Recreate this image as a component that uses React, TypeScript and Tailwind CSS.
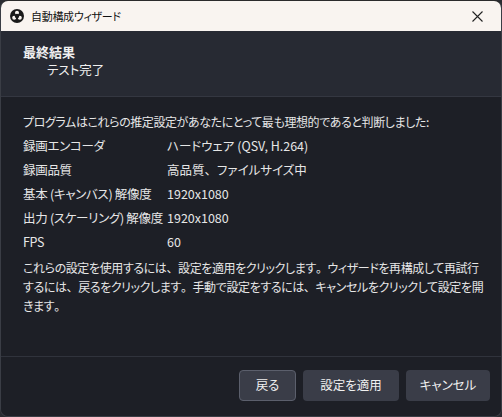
import React from 'react';

const rows = [
  { label: '録画エンコーダ', value: 'ハードウェア (QSV, H.264)' },
  { label: '録画品質', value: '高品質、ファイルサイズ中' },
  { label: '基本 (キャンバス) 解像度', value: '1920x1080' },
  { label: '出力 (スケーリング) 解像度', value: '1920x1080' },
  { label: 'FPS', value: '60' },
];

const noteLines = [
  'これらの設定を使用するには、設定を適用をクリックします。ウィザードを再構成して再試行',
  'するには、戻るをクリックします。手動で設定をするには、キャンセルをクリックして設定を開',
  'きます。',
];

// keep 、 and 。 full width while kana use proportional widths
const Jp = ({ text }: { text: string }) => (
  <>
    {text.split(/([、。])/).map((part, i) =>
      part === '、' || part === '。' ? (
        <span key={i} className="[font-feature-settings:normal]">{part}</span>
      ) : (
        <React.Fragment key={i}>{part}</React.Fragment>
      )
    )}
  </>
);

const ObsLogo = () => (
  <svg width="14" height="14" viewBox="0 0 16 16">
    <circle cx="8" cy="8" r="8" fill="#1a1a1a" />
    <circle cx="8" cy="4.3" r="2.3" fill="#f9f4f0" />
    <circle cx="4.8" cy="10" r="2.3" fill="#f9f4f0" />
    <circle cx="11.2" cy="10" r="2.3" fill="#f9f4f0" />
    <circle cx="8" cy="8" r="2.6" fill="#1a1a1a" />
  </svg>
);

const App = () => {
  return (
    <div className="w-[502px] h-[417px] bg-[#2a2c31] font-['Noto_Sans_CJK_JP',sans-serif] [font-feature-settings:'palt']">
      <div className="w-full h-full flex flex-col rounded-[8px] overflow-hidden border border-[#3a3d45] border-t-[#2b2b2b]">
        {/* title bar */}
        <div className="h-[30px] shrink-0 bg-[#f9f4f0] flex items-center pl-[9px] pr-[18px]">
          <ObsLogo />
          <span className="ml-[7px] text-[11px] tracking-[-0.3px] text-[#111]">自動構成ウィザード</span>
          <svg className="ml-auto" width="11" height="11" viewBox="0 0 11 11">
            <path d="M0.5 0.5 L10.5 10.5 M10.5 0.5 L0.5 10.5" stroke="#222" strokeWidth="1.1" />
          </svg>
        </div>

        {/* header */}
        <div className="h-[66px] shrink-0 bg-[#272a33] border-b border-[#343741] pl-[22px] pt-[12px] text-[#f0f0f0]">
          <div className="text-[13px] font-bold leading-[18px]">最終結果</div>
          <div className="text-[12.5px] leading-[18px] pl-[24px]">テスト完了</div>
        </div>

        {/* content */}
        <div className="flex-1 min-h-0 overflow-hidden bg-[#1d1f26] border-b border-[#30333c] pl-[22px] pr-[8px] pt-[13px] text-[12.5px] text-[#e6e6e6]">
          <div className="leading-[24px] whitespace-nowrap text-[12px] tracking-[-0.4px]">プログラムはこれらの推定設定があなたにとって最も理想的であると判断しました:</div>
          {rows.map((r) => (
            <div key={r.label} className="flex leading-[24px] whitespace-nowrap">
              <span className="w-[144px] shrink-0 tracking-[-0.3px]">{r.label}</span>
              <span>
                <Jp text={r.value} />
              </span>
            </div>
          ))}
          <div className="mt-[4px] leading-[19px] text-[12px] tracking-[-0.4px]">
            {noteLines.map((l) => (
              <div key={l} className="whitespace-nowrap">
                <Jp text={l} />
              </div>
            ))}
          </div>
        </div>

        {/* buttons */}
        <div className="h-[59px] shrink-0 bg-[#1d1f26] flex items-start justify-end gap-[7px] pt-[13px] pr-[11px] text-[12.5px] text-[#f0f0f0]">
          <button className="h-[31px] w-[57px] rounded-[4px] bg-[#3a3d48] border border-[#5b5f6c]">戻る</button>
          <button className="h-[31px] w-[96px] rounded-[4px] bg-[#3a3d48]">設定を適用</button>
          <button className="h-[31px] w-[84px] rounded-[4px] bg-[#3a3d48]">キャンセル</button>
        </div>
      </div>
    </div>
  );
};

export default App;
